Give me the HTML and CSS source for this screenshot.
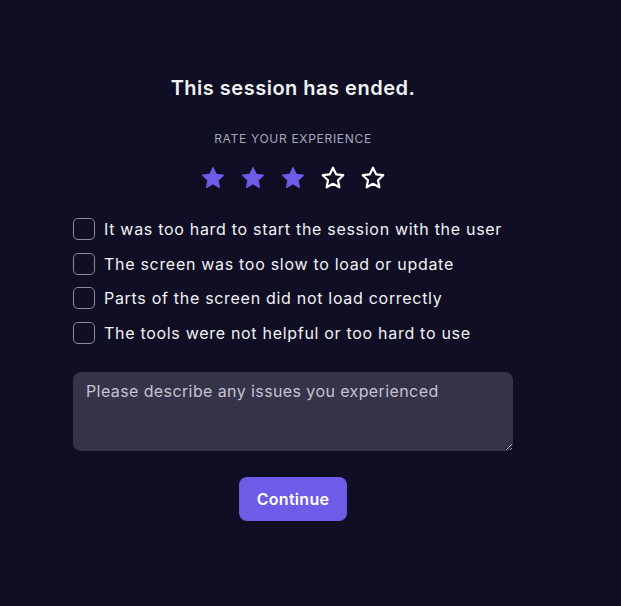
FILE: index.html
```html
<!DOCTYPE html>
<html>
<head>
<meta charset="utf-8">
<link rel="stylesheet" href="styles.css">
</head>
<body>
<main class="page">
  <section class="card">
    <h1 class="title">This session has ended.</h1>
    <p class="label">RATE YOUR EXPERIENCE</p>
    <div class="stars">
      <svg class="star filled" viewBox="0 0 24 24"><path d="M12 2.5l2.9 6.1 6.6.8-4.9 4.6 1.3 6.6L12 17.3l-5.9 3.3 1.3-6.6-4.9-4.6 6.6-.8z"/></svg>
      <svg class="star filled" viewBox="0 0 24 24"><path d="M12 2.5l2.9 6.1 6.6.8-4.9 4.6 1.3 6.6L12 17.3l-5.9 3.3 1.3-6.6-4.9-4.6 6.6-.8z"/></svg>
      <svg class="star filled" viewBox="0 0 24 24"><path d="M12 2.5l2.9 6.1 6.6.8-4.9 4.6 1.3 6.6L12 17.3l-5.9 3.3 1.3-6.6-4.9-4.6 6.6-.8z"/></svg>
      <svg class="star empty" viewBox="0 0 24 24"><path d="M12 2.5l2.9 6.1 6.6.8-4.9 4.6 1.3 6.6L12 17.3l-5.9 3.3 1.3-6.6-4.9-4.6 6.6-.8z"/></svg>
      <svg class="star empty" viewBox="0 0 24 24"><path d="M12 2.5l2.9 6.1 6.6.8-4.9 4.6 1.3 6.6L12 17.3l-5.9 3.3 1.3-6.6-4.9-4.6 6.6-.8z"/></svg>
    </div>
    <ul class="options">
      <li class="option"><span class="box"></span><span>It was too hard to start the session with the user</span></li>
      <li class="option"><span class="box"></span><span>The screen was too slow to load or update</span></li>
      <li class="option"><span class="box"></span><span>Parts of the screen did not load correctly</span></li>
      <li class="option"><span class="box"></span><span>The tools were not helpful or too hard to use</span></li>
    </ul>
    <textarea class="notes" placeholder="Please describe any issues you experienced"></textarea>
    <button class="continue">Continue</button>
  </section>
</main>
</body>
</html>
```
FILE: styles.css
```css
html, body {
  margin: 0;
  padding: 0;
  background: #0f0e24;
  height: 100%;
}
body {
  font-family: Inter, "Noto Sans", sans-serif;
  color: #f2f2f5;
}
.page {
  padding: 74px 0 0 73px;
}
.card {
  width: 440px;
  display: flex;
  flex-direction: column;
  align-items: center;
}
.title {
  margin: 0;
  font-size: 20px;
  font-weight: 600;
  line-height: 28px;
  letter-spacing: 0.5px;
}
.label {
  margin: 29px 0 0;
  font-size: 12px;
  line-height: 16px;
  color: #a9a8b6;
  letter-spacing: 0.7px;
}
.stars {
  margin-top: 18px;
  display: flex;
  gap: 14px;
}
.star {
  width: 26px;
  height: 26px;
}
.star.filled path { fill: #6c5ce7; stroke: #6c5ce7; stroke-width: 1.2; stroke-linejoin: round; }
.star.empty path { fill: none; stroke: #ffffff; stroke-width: 2; stroke-linejoin: round; }
.options {
  list-style: none;
  margin: 27px 0 0;
  padding: 0;
  align-self: stretch;
  display: flex;
  flex-direction: column;
  gap: 12.6px;
}
.option {
  display: flex;
  align-items: center;
  gap: 9px;
  font-size: 16px;
  line-height: 22px;
  letter-spacing: 0.7px;
  color: #f2f2f5;
}
.box {
  width: 20px;
  height: 20px;
  border: 1px solid #8c8b9b;
  border-radius: 5px;
  flex: none;
}
.notes {
  margin-top: 28px;
  align-self: stretch;
  box-sizing: border-box;
  height: 79px;
  background: #35334a;
  border: none;
  border-radius: 8px;
  padding: 9px 13px;
  font-family: inherit;
  font-size: 16px;
  line-height: 20px;
  letter-spacing: 0.4px;
  color: #f2f2f5;
  outline: none;
}
.notes::placeholder { color: #c4c3cf; }
.continue {
  margin-top: 26px;
  width: 108px;
  height: 44px;
  border: none;
  border-radius: 8px;
  background: #6c5ce7;
  color: #ffffff;
  font-family: inherit;
  font-size: 16px;
  font-weight: 600;
  letter-spacing: 0.3px;
}
```
